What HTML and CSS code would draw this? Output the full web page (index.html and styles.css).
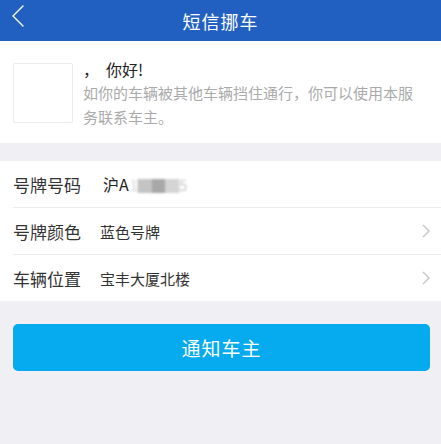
FILE: index.html
```html
<!DOCTYPE html>
<html lang="zh">
<head>
<meta charset="utf-8">
<link rel="stylesheet" href="styles.css">
</head>
<body>
<header class="nav">
  <svg class="back" viewBox="0 0 14 24" width="14" height="24"><path d="M12 2 L2 12 L12 22" fill="none" stroke="#fff" stroke-width="1.4" stroke-linecap="round" stroke-linejoin="round"/></svg>
  <h1 class="title">短信挪车</h1>
</header>
<section class="intro">
  <div class="avatar"></div>
  <div class="intro-text">
    <div class="greet"><span class="comma">，</span>你好!</div>
    <p class="desc">如你的车辆被其他车辆挡住通行，你可以使用本服务联系车主。</p>
  </div>
</section>
<section class="list">
  <div class="row">
    <span class="label">号牌号码</span>
    <span class="value plate">沪A<span class="blur"><span class="b1">1</span><span class="b2">█</span><span class="b3">█</span><span class="b1">█</span><span class="b2">5</span></span></span>
  </div>
  <div class="row">
    <span class="label">号牌颜色</span>
    <span class="value">蓝色号牌</span>
    <svg class="chev" viewBox="0 0 8 14" width="8" height="14"><path d="M1 1 L7 7 L1 13" fill="none" stroke="#c4c4c8" stroke-width="1.4"/></svg>
  </div>
  <div class="row">
    <span class="label">车辆位置</span>
    <span class="value">宝丰大厦北楼</span>
    <svg class="chev" viewBox="0 0 8 14" width="8" height="14"><path d="M1 1 L7 7 L1 13" fill="none" stroke="#c4c4c8" stroke-width="1.4"/></svg>
  </div>
</section>
<div class="actions">
  <button class="btn">通知车主</button>
</div>
</body>
</html>
```
FILE: styles.css
```css
html, body {
  margin: 0;
  padding: 0;
}
body {
  background: #f0eff4;
  font-family: "Noto Sans CJK SC", "Noto Sans", sans-serif;
  width: 441px;
  height: 444px;
  overflow: hidden;
}
.nav {
  height: 41px;
  background: #2160c0;
  display: flex;
  align-items: center;
  justify-content: center;
  position: relative;
}
.back {
  position: absolute;
  left: 11px;
  top: 4px;
}
.title {
  margin: 0;
  color: #fff;
  font-size: 18px;
  font-weight: 400;
  letter-spacing: 1px;
}
.intro {
  background: #fff;
  display: flex;
  padding: 21px 13px 20px 13px;
  gap: 10px;
  height: 61px;
}
.avatar {
  width: 60px;
  height: 60px;
  border: 1px solid #ececec;
  box-sizing: border-box;
  border-radius: 2px;
  flex-shrink: 0;
  margin-top: 1px;
}
.intro-text {
  flex: 1;
  margin-top: -4px;
}
.greet {
  font-size: 16px;
  color: #222;
  line-height: 22px;
}
.comma {
  display: inline-block;
  width: 23px;
}
.desc {
  margin: 1px 0 0 0;
  font-size: 15px;
  color: #aaa;
  line-height: 24px;
  padding-right: 8px;
}
.list {
  background: #fff;
  margin-top: 18px;
}
.row {
  height: 46px;
  display: flex;
  align-items: center;
  margin-left: 13px;
  padding-right: 11px;
  border-bottom: 1px solid #ececec;
}
.row:last-child {
  border-bottom: none;
}
.label {
  font-size: 17px;
  color: #333;
  width: 87px;
}
.value {
  font-size: 15px;
  color: #333;
  flex: 1;
}
.plate {
  font-size: 16px;
  color: #222;
  padding-left: 3px;
}
.blur {
  filter: blur(1.2px);
  font-size: 14px;
  margin-left: 1px;
}
.b1 {
  color: #d4d4d4;
}
.b2 {
  color: #c4c4c4;
}
.b3 {
  color: #a8a8a8;
}
.chev {
  flex-shrink: 0;
}
.actions {
  padding: 23px 11px 0 13px;
}
.btn {
  width: 100%;
  height: 47px;
  border: none;
  border-radius: 5px;
  background: #06aaee;
  color: #fff;
  font-family: "Noto Sans CJK SC", sans-serif;
  font-size: 19px;
  letter-spacing: 1px;
}
```
